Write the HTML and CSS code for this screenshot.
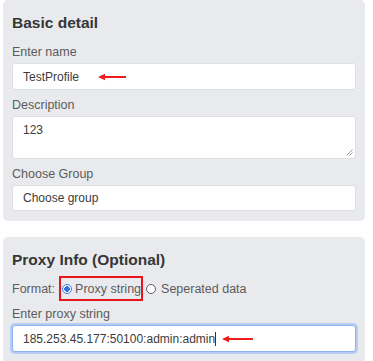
FILE: index.html
```html
<!DOCTYPE html>
<html lang="en">
<head>
<meta charset="utf-8">
<title>Profile</title>
<link rel="stylesheet" href="styles.css">
</head>
<body>
<div class="page">
  <section class="card">
    <h2 class="card-title">Basic detail</h2>
    <div class="field">
      <div class="label">Enter name</div>
      <div class="input">
        <span class="value">TestProfile</span>
        <svg class="arrow arrow-name" width="28" height="8" viewBox="0 0 28 8"><line x1="5" y1="4" x2="28" y2="4" stroke="#ee1c1c" stroke-width="2"/><polygon points="0,4 7,0.8 7,7.2" fill="#ee1c1c"/></svg>
      </div>
    </div>
    <div class="field">
      <div class="label">Description</div>
      <div class="input textarea">
        <span class="value">123</span>
        <svg class="grip" width="7" height="7" viewBox="0 0 7 7"><line x1="0.5" y1="6.5" x2="6.5" y2="0.5" stroke="#8a8a8a" stroke-width="0.9"/><line x1="3.5" y1="6.5" x2="6.5" y2="3.5" stroke="#8a8a8a" stroke-width="0.9"/></svg>
      </div>
    </div>
    <div class="field last">
      <div class="label">Choose Group</div>
      <div class="input select">
        <span class="value">Choose group</span>
      </div>
    </div>
  </section>

  <section class="card card-proxy">
    <h2 class="card-title">Proxy Info (Optional)</h2>
    <div class="format-row">
      <span class="format-label">Format:</span>
      <span class="highlight">
        <span class="radio checked"></span>
        <span class="radio-text">Proxy string</span>
      </span>
      <span class="radio"></span>
      <span class="radio-text second">Seperated data</span>
    </div>
    <div class="field">
      <div class="label">Enter proxy string</div>
      <div class="input focused">
        <span class="value">185.253.45.177:50100:admin:admin</span><span class="caret"></span>
        <svg class="arrow arrow-proxy" width="31" height="8" viewBox="0 0 31 8"><line x1="5" y1="4" x2="31" y2="4" stroke="#ee1c1c" stroke-width="2"/><polygon points="0,4 7,0.8 7,7.2" fill="#ee1c1c"/></svg>
      </div>
    </div>
  </section>
</div>
</body>
</html>
```
FILE: styles.css
```css
html, body {
  margin: 0;
  padding: 0;
  background: #ffffff;
  overflow: hidden;
}

body {
  font-family: "Liberation Sans", Arial, sans-serif;
  color: #333;
}

.page {
  display: flex;
  flex-direction: column;
  gap: 16px;
  padding: 0 8px 0 3px;
}

.card {
  width: 362px;
  box-sizing: border-box;
  background: #e9eaee;
  border-radius: 5px;
  padding: 12px 9px 10px 9px;
}

.card-proxy {
  padding-bottom: 40px;
}

.card-title {
  margin: 0 0 10px;
  font-size: 15.5px;
  line-height: 22px;
  font-weight: bold;
  color: #363636;
}

.field {
  margin-bottom: 7px;
}

.field.last {
  margin-bottom: 0;
}

.label {
  font-size: 12.5px;
  line-height: 16px;
  color: #5c5c5c;
  margin-bottom: 3px;
}

.input {
  position: relative;
  display: flex;
  align-items: center;
  box-sizing: border-box;
  height: 27px;
  background: #fff;
  border: 1px solid #dedfe3;
  border-radius: 3px;
  padding: 0 10px;
  font-size: 12px;
  color: #3c3c3c;
}

.input.textarea {
  height: 43px;
  align-items: flex-start;
  padding-top: 6px;
  line-height: 14px;
}

.input.select {
  height: 26px;
}

.input.focused {
  border: 1px solid #8fb1ee;
  box-shadow: 0 0 0 2px #b7cdf6;
}

.value {
  white-space: nowrap;
}

.caret {
  display: inline-block;
  width: 1px;
  height: 14px;
  background: #333;
}

.arrow {
  flex: none;
  display: block;
}

.arrow-name {
  margin-left: 19px;
}

.arrow-proxy {
  margin-left: 6px;
}

.grip {
  position: absolute;
  right: 2px;
  bottom: 2px;
}

.format-row {
  display: flex;
  align-items: center;
  height: 16px;
  margin: 10px 0 9px;
  font-size: 12.5px;
  color: #5c5c5c;
}

.format-label {
  margin-right: 4px;
}

.highlight {
  display: inline-flex;
  align-items: center;
  box-sizing: border-box;
  height: 25px;
  margin: -5px 0 -4px;
  border: 2px solid #e8141b;
  padding: 0 0 0 1px;
}

.radio {
  display: inline-block;
  box-sizing: border-box;
  width: 10px;
  height: 10px;
  border-radius: 50%;
  border: 1px solid #5f5f5f;
  background: #fff;
  flex: none;
}

.highlight + .radio {
  margin-left: 3px;
}

.radio.checked {
  border: 1.5px solid #3a7bea;
  background: radial-gradient(circle, #2f73e6 0 2.6px, #fff 3px);
}

.radio-text {
  margin-left: 3px;
  white-space: nowrap;
}

.radio-text.second {
  margin-left: 5px;
}
```
